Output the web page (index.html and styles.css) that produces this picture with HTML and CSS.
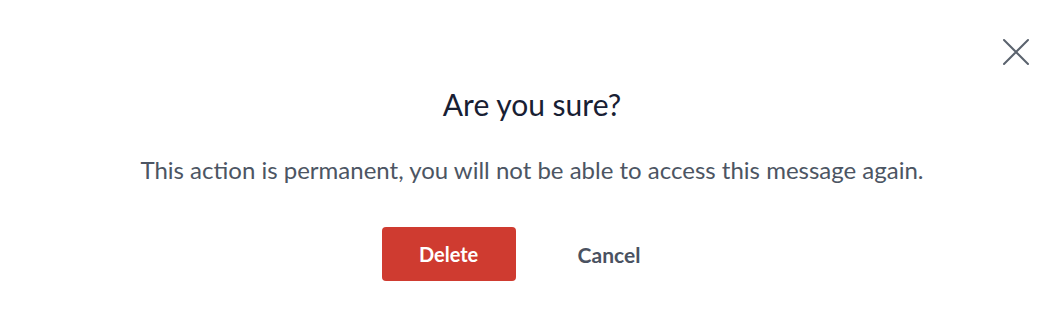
FILE: index.html
```html
<!DOCTYPE html>
<html>
<head>
<meta charset="utf-8">
<link rel="stylesheet" href="styles.css">
</head>
<body>
<div class="dialog">
  <div class="topbar">
    <button class="close" aria-label="Close">
      <svg width="28" height="28" viewBox="0 0 28 28"><path d="M2 2 L26 26 M26 2 L2 26" stroke="#5b636e" stroke-width="2" stroke-linecap="round" fill="none"/></svg>
    </button>
  </div>
  <h2 class="title">Are you sure?</h2>
  <p class="message">This action is permanent, you will not be able to access this message again.</p>
  <div class="actions">
    <button class="btn btn-delete">Delete</button>
    <button class="btn btn-cancel">Cancel</button>
  </div>
</div>
</body>
</html>
```
FILE: styles.css
```css
html, body {
  margin: 0;
  padding: 0;
  background: #ffffff;
}
body {
  font-family: Lato, "Open Sans", "Liberation Sans", sans-serif;
  width: 1064px;
  height: 310px;
  overflow: hidden;
}
.dialog {
  display: flex;
  flex-direction: column;
  align-items: center;
}
.topbar {
  align-self: stretch;
  display: flex;
  justify-content: flex-end;
  padding: 38px 34px 0 0;
  height: 28px;
}
.close {
  background: none;
  border: 0;
  padding: 0;
  width: 28px;
  height: 28px;
  cursor: pointer;
}
.close svg { display: block; }
.title {
  margin: 20px 0 0;
  font-size: 30px;
  font-weight: 400;
  color: #182033;
  line-height: 36px;
}
.message {
  margin: 33px 0 0;
  font-size: 24px;
  color: #4c5563;
  line-height: 30px;
}
.actions {
  margin-top: 42px;
  display: flex;
  gap: 62px;
  align-items: center;
  padding-right: 42px;
}
.btn {
  font-family: inherit;
  font-size: 20px;
  font-weight: 700;
  border: 0;
  cursor: pointer;
}
.btn-delete {
  background: #cf3b30;
  color: #fff;
  width: 134px;
  height: 54px;
  border-radius: 4px;
}
.btn-cancel {
  background: none;
  color: #4a5261;
  padding: 0;
  font-size: 21px;
}
```
